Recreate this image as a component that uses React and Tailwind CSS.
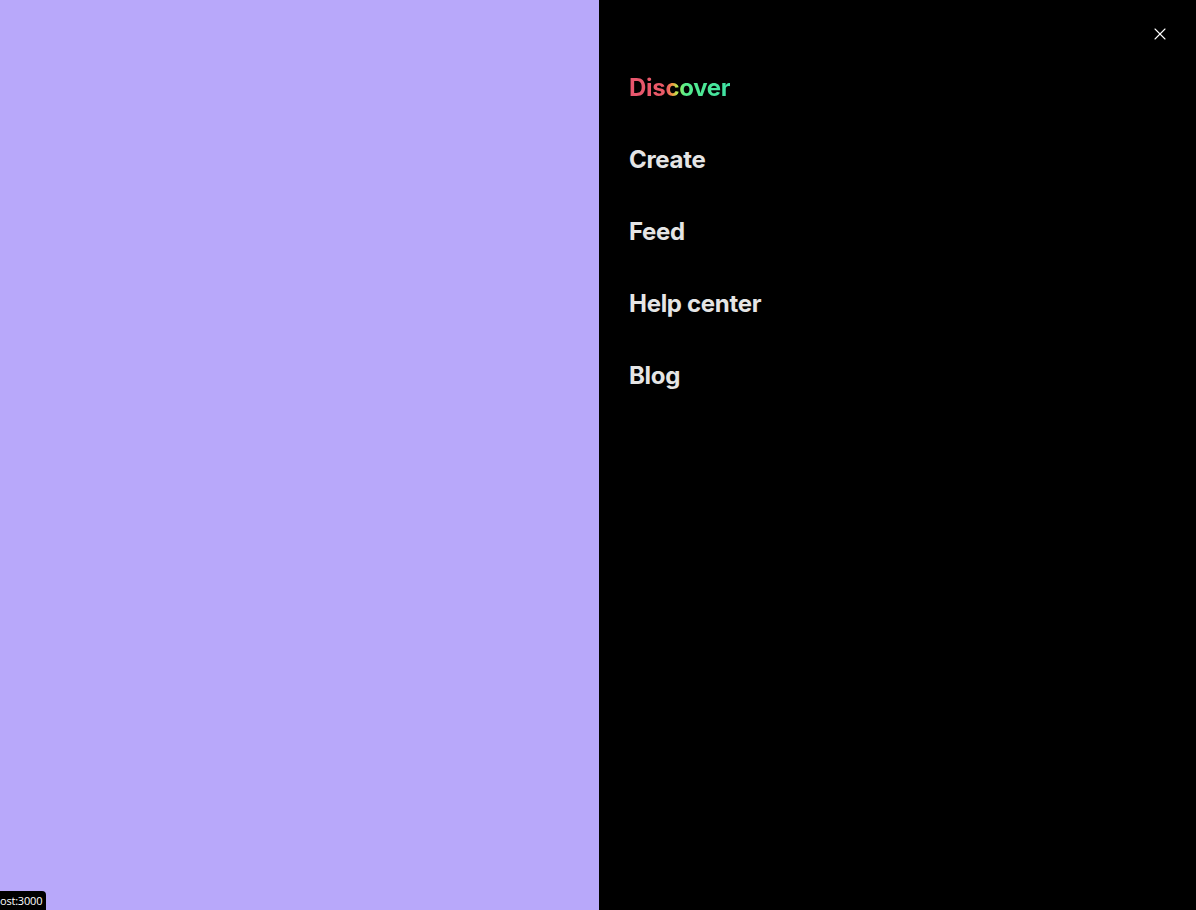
import React from "react";
import { X } from "lucide-react";

const links = ["Create", "Feed", "Help center", "Blog"];

export default function App() {
  return (
    <div className="relative flex h-[910px] w-full overflow-hidden" style={{ fontFamily: "Inter, 'Liberation Sans', sans-serif" }}>
      <div className="w-[599px] shrink-0 bg-[#b8a8fa]" />

      <aside className="relative flex-1 bg-black">
        <button className="absolute right-[26px] top-[24px] text-white">
          <X size={20} strokeWidth={1.3} />
        </button>

        <nav className="flex flex-col gap-[43px] pl-[30px] pt-[73px]">
          <a
            className="w-fit bg-clip-text text-[24px] font-bold leading-[29px] tracking-[-0.3px] text-transparent"
            style={{
              backgroundImage:
                "linear-gradient(to right, #e8566e 0%, #ea5a66 38%, #f29a40 43%, #b0ee52 48%, #55ec8c 55%, #3fe0a4 100%)",
            }}
          >
            Discover
          </a>
          {links.map((l) => (
            <a key={l} className="w-fit text-[24px] font-bold leading-[29px] tracking-[-0.3px] text-[#e5e5e5]">
              {l}
            </a>
          ))}
        </nav>
      </aside>

      <div className="absolute bottom-0 left-0 flex h-[19px] w-[46px] items-center overflow-hidden rounded-tr-[4px] bg-black text-[11px] leading-none tracking-[-0.2px] text-white" style={{ fontFamily: "'Open Sans', 'Liberation Sans', sans-serif" }}>
        <span className="whitespace-nowrap">ost:3000</span>
      </div>
    </div>
  );
}
